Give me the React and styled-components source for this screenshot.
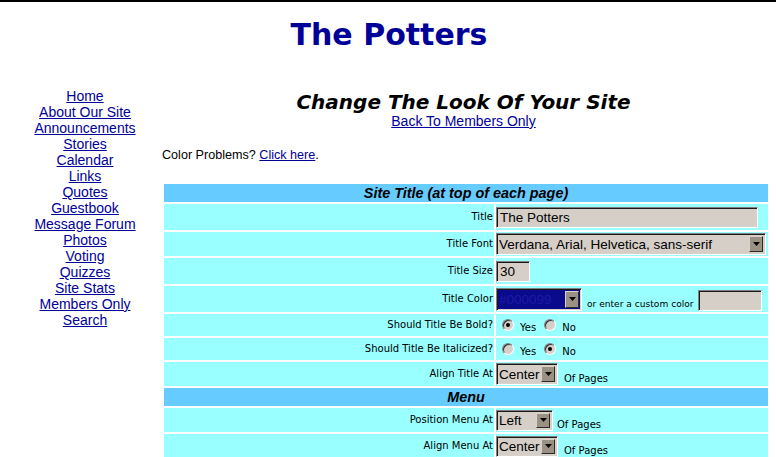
import React from "react";
import styled, { createGlobalStyle } from "styled-components";

const GlobalStyle = createGlobalStyle`
  html, body {
    margin: 0;
    padding: 0;
    background: #ffffff;
  }
  body {
    font-family: "Liberation Sans", Arial, sans-serif;
    color: #000;
  }
`;

const Page = styled.div`
  border-top: 2px solid #000;
  padding: 0 6px 0 8px;
  min-height: 455px;
`;

const SiteTitle = styled.h1`
  margin: 18px 0 0;
  font-family: "DejaVu Sans", Verdana, sans-serif;
  font-size: 30px;
  line-height: 30px;
  font-weight: bold;
  color: #000099;
  text-align: center;
`;

const Layout = styled.div`
  display: flex;
  margin-top: 38px;
`;

const Nav = styled.nav`
  width: 154px;
  flex: none;
  display: flex;
  flex-direction: column;
  align-items: center;
`;

const NavLink = styled.a`
  font-size: 14px;
  line-height: 16px;
  color: #000099;
  text-decoration: underline;
`;

const Main = styled.main`
  flex: 1;
  min-width: 0;
`;

const PageHeading = styled.h2`
  margin: 3px 0 0;
  padding-right: 5px;
  font-family: "DejaVu Sans", Verdana, sans-serif;
  font-size: 20px;
  line-height: 22px;
  font-weight: bold;
  font-style: italic;
  text-align: center;
`;

const BackLine = styled.div`
  text-align: center;
  padding-right: 5px;
  font-size: 14px;
  line-height: 16px;
`;

const Link = styled.a`
  color: #000099;
  text-decoration: underline;
`;

const Note = styled.p`
  margin: 19px 0 0;
  font-size: 12.6px;
  line-height: 15px;
`;

const Table = styled.table`
  margin-top: 19px;
  width: 100%;
  border-collapse: separate;
  border-spacing: 2px;
  table-layout: fixed;
`;

const LabelCol = styled.col`
  width: 330px;
`;

const Row = styled.tr`
  height: ${(p) => p.$h}px;
`;

const HeaderCell = styled.td`
  padding: 0;
  background: #66ccff;
  text-align: center;
  font-family: "Liberation Sans", Arial, sans-serif;
  font-size: 14.4px;
  line-height: 16px;
  font-weight: bold;
  font-style: italic;
`;

const LabelCell = styled.td`
  padding: 0 1px 0 0;
  background: #99ffff;
  text-align: right;
  vertical-align: middle;
  font-family: "DejaVu Sans", Verdana, sans-serif;
  font-size: 10px;
  line-height: 12px;
  white-space: nowrap;
`;

const ControlCell = styled.td`
  padding: 0;
  background: #99ffff;
  vertical-align: middle;
`;

const Controls = styled.div`
  display: flex;
  align-items: ${(p) => (p.$baseline ? "baseline" : "flex-end")};
  padding-top: ${(p) => p.$pt || 0}px;
`;

const SmallText = styled.span`
  flex: none;
  white-space: nowrap;
  font-family: "DejaVu Sans", Verdana, sans-serif;
  font-size: ${(p) => p.$size || 10}px;
  line-height: 12px;
  margin-left: ${(p) => p.$ml || 0}px;
  margin-bottom: ${(p) => p.$mb || 0}px;
`;

const bevel = `
  border: 1px solid;
  border-color: #808080 #ffffff #ffffff #808080;
  box-shadow: inset 1px 1px 0 #1a1a1a, inset -1px -1px 0 #d8d2ca;
`;

const TextBox = styled.input`
  box-sizing: border-box;
  flex: none;
  width: ${(p) => p.$w}px;
  height: 21px;
  margin: 0 0 0 ${(p) => p.$ml || 0}px;
  padding: 0 3px;
  ${bevel}
  background: #d6cfc7;
  font-family: "Liberation Sans", Arial, sans-serif;
  font-size: 13.5px;
  color: #000;
  outline: none;
`;

const SelectBox = styled.div`
  box-sizing: border-box;
  flex: none;
  display: flex;
  width: ${(p) => p.$w}px;
  height: ${(p) => p.$h || 22}px;
  padding: 2px;
  ${bevel}
  background: ${(p) => p.$bg || "#d6cfc7"};
`;

const Select = styled.select`
  appearance: none;
  -webkit-appearance: none;
  flex: 1;
  min-width: 0;
  height: 100%;
  margin: 0;
  padding: 0;
  border: none;
  background: transparent;
  font-family: "Liberation Sans", Arial, sans-serif;
  font-size: 13.5px;
  color: ${(p) => p.$color || "#000"};
  outline: none;
  overflow: hidden;
`;

const ArrowButton = styled.span`
  box-sizing: border-box;
  flex: none;
  width: 14px;
  height: 100%;
  display: flex;
  align-items: center;
  justify-content: center;
  background: #9a9182;
  border: 1px solid;
  border-color: #d8d2ca #2a2a2a #2a2a2a #d8d2ca;
`;

const Radio = styled.span`
  box-sizing: border-box;
  position: relative;
  flex: none;
  width: 12px;
  height: 12px;
  margin: 0 6px 0 ${(p) => p.$ml}px;
  border-radius: 50%;
  border: 1px solid;
  border-color: #808080 #ffffff #ffffff #808080;
  box-shadow: inset 1px 1px 0 #303030;
  background: #d6cfc7;

  &::after {
    content: "";
    display: ${(p) => (p.$checked ? "block" : "none")};
    position: absolute;
    left: 3px;
    top: 3px;
    width: 4px;
    height: 4px;
    border-radius: 50%;
    background: #000;
  }
`;

const Arrow = () => (
  <ArrowButton>
    <svg width="7" height="4" viewBox="0 0 7 4">
      <polygon points="0,0 7,0 3.5,4" fill="#000" />
    </svg>
  </ArrowButton>
);

const Dropdown = ({ w, h, bg, color, value, options }) => (
  <SelectBox $w={w} $h={h} $bg={bg}>
    <Select defaultValue={value} $color={color}>
      {options.map((o) => (
        <option key={o} value={o}>
          {o}
        </option>
      ))}
    </Select>
    <Arrow />
  </SelectBox>
);

const YesNo = ({ yes }) => (
  <Controls $baseline $pt={2}>
    <Radio $ml={6} $checked={yes} />
    <SmallText>Yes</SmallText>
    <Radio $ml={8} $checked={!yes} />
    <SmallText>No</SmallText>
  </Controls>
);

const navItems = [
  "Home",
  "About Our Site",
  "Announcements",
  "Stories",
  "Calendar",
  "Links",
  "Quotes",
  "Guestbook",
  "Message Forum",
  "Photos",
  "Voting",
  "Quizzes",
  "Site Stats",
  "Members Only",
  "Search",
];

const alignOptions = ["Left", "Center", "Right"];

const App = () => {
  return (
    <>
      <GlobalStyle />
      <Page>
        <SiteTitle>The Potters</SiteTitle>
        <Layout>
          <Nav>
            {navItems.map((item) => (
              <NavLink key={item} href="#">
                {item}
              </NavLink>
            ))}
          </Nav>
          <Main>
            <PageHeading>Change The Look Of Your Site</PageHeading>
            <BackLine>
              <Link href="#">Back To Members Only</Link>
            </BackLine>
            <Note>
              Color Problems? <Link href="#">Click here</Link>.
            </Note>
            <Table>
              <colgroup>
                <LabelCol />
                <col />
              </colgroup>
              <tbody>
                <Row $h={18}>
                  <HeaderCell colSpan={2}>Site Title (at top of each page)</HeaderCell>
                </Row>
                <Row $h={26}>
                  <LabelCell>Title</LabelCell>
                  <ControlCell>
                    <Controls>
                      <TextBox $w={262} defaultValue="The Potters" />
                    </Controls>
                  </ControlCell>
                </Row>
                <Row $h={24}>
                  <LabelCell>Title Font</LabelCell>
                  <ControlCell>
                    <Controls>
                      <Dropdown
                        w={270}
                        value="Verdana, Arial, Helvetica, sans-serif"
                        options={[
                          "Verdana, Arial, Helvetica, sans-serif",
                          "Arial, Helvetica, sans-serif",
                          "Times New Roman, serif",
                        ]}
                      />
                    </Controls>
                  </ControlCell>
                </Row>
                <Row $h={26}>
                  <LabelCell>Title Size</LabelCell>
                  <ControlCell>
                    <Controls>
                      <TextBox $w={34} defaultValue="30" />
                    </Controls>
                  </ControlCell>
                </Row>
                <Row $h={26}>
                  <LabelCell>Title Color</LabelCell>
                  <ControlCell>
                    <Controls>
                      <Dropdown
                        w={86}
                        h={23}
                        bg="#0a0a8c"
                        color="#1c1ca4"
                        value="#000099"
                        options={["#000099", "#000000", "#990000"]}
                      />
                      <SmallText $ml={5} $mb={1} $size={9.1}>
                        or enter a custom color
                      </SmallText>
                      <TextBox $w={64} $ml={4} defaultValue="" />
                    </Controls>
                  </ControlCell>
                </Row>
                <Row $h={22}>
                  <LabelCell>Should Title Be Bold?</LabelCell>
                  <ControlCell>
                    <YesNo yes />
                  </ControlCell>
                </Row>
                <Row $h={22}>
                  <LabelCell>Should Title Be Italicized?</LabelCell>
                  <ControlCell>
                    <YesNo yes={false} />
                  </ControlCell>
                </Row>
                <Row $h={24}>
                  <LabelCell>Align Title At</LabelCell>
                  <ControlCell>
                    <Controls>
                      <Dropdown w={62} value="Center" options={alignOptions} />
                      <SmallText $ml={6}>Of Pages</SmallText>
                    </Controls>
                  </ControlCell>
                </Row>
                <Row $h={18}>
                  <HeaderCell colSpan={2}>Menu</HeaderCell>
                </Row>
                <Row $h={24}>
                  <LabelCell>Position Menu At</LabelCell>
                  <ControlCell>
                    <Controls>
                      <Dropdown w={57} h={21} value="Left" options={["Left", "Top"]} />
                      <SmallText $ml={4}>Of Pages</SmallText>
                    </Controls>
                  </ControlCell>
                </Row>
                <Row $h={24}>
                  <LabelCell>Align Menu At</LabelCell>
                  <ControlCell>
                    <Controls>
                      <Dropdown w={62} h={21} value="Center" options={alignOptions} />
                      <SmallText $ml={6}>Of Pages</SmallText>
                    </Controls>
                  </ControlCell>
                </Row>
              </tbody>
            </Table>
          </Main>
        </Layout>
      </Page>
    </>
  );
};

export default App;
